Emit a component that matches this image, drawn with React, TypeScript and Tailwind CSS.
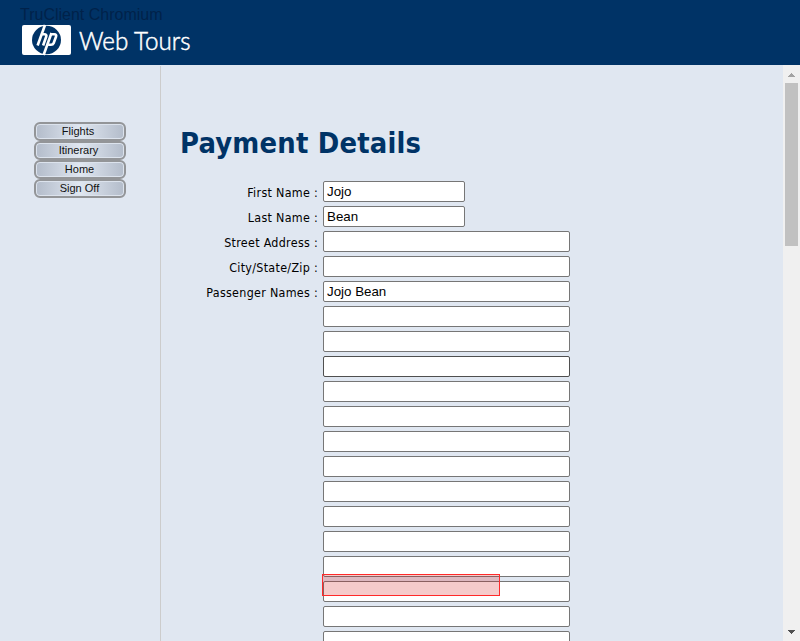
const navItems = [
  { label: 'Flights', shift: 'pr-1' },
  { label: 'Itinerary', shift: 'pr-[3px]' },
  { label: 'Home', shift: 'pr-px' },
  { label: 'Sign Off', shift: 'pr-px' },
];

const fields = [
  { label: 'First Name :', value: 'Jojo', width: 'w-[142px]', border: 'border-[#767676]' },
  { label: 'Last Name :', value: 'Bean', width: 'w-[142px]', border: 'border-[#767676]' },
  { label: 'Street Address :', value: '', width: 'w-[247px]', border: 'border-[#767676]' },
  { label: 'City/State/Zip :', value: '', width: 'w-[247px]', border: 'border-[#767676]' },
  { label: 'Passenger Names :', value: 'Jojo Bean', width: 'w-[247px]', border: 'border-[#767676]' },
  ...Array.from({ length: 14 }, (_, i) => ({
    label: '',
    value: '',
    width: 'w-[247px]',
    border: i === 2 ? 'border-[#4f4f4f]' : 'border-[#767676]',
  })),
];

function Logo() {
  return (
    <svg width="172" height="32" viewBox="0 0 172 32" className="block">
      <rect x="0" y="1" width="49" height="30" rx="2" fill="#fff" />
      <ellipse cx="24.5" cy="16" rx="14.5" ry="14.3" fill="#003366" />
      <g fill="none" stroke="#fff" strokeWidth="2.6">
        <path d="M23 1 L15.6 21.5" />
        <path d="M19.5 10.3 H22.3 Q25.1 10.3 24.2 12.8 L21.1 21.5" />
        <path d="M29.5 9 L21.6 31" />
        <path d="M28.1 10.3 H32.2 Q34.9 10.3 34 12.8 L31.6 19.2 Q31 20.7 29 20.7 H26.1" />
      </g>
      <text x="57" y="26" fontSize="24.5" fontWeight="300" fill="#fff" stroke="#fff" strokeWidth="0.5" textLength="111.5" lengthAdjust="spacingAndGlyphs" fontFamily="Lato, sans-serif">Web Tours</text>
    </svg>
  );
}

function Scrollbar() {
  return (
    <div className="flex w-[17px] shrink-0 flex-col items-center bg-[#f0f0f0] pt-px">
      <svg width="17" height="17" viewBox="0 0 17 17" shapeRendering="crispEdges">
        <path d="M5 11H12V10H11V9H10V8H9V7H8V8H7V9H6V10H5Z" fill="#a3a3a3" />
      </svg>
      <div className="h-[163px] w-[13px] bg-[#c1c1c1]" />
      <svg className="mt-auto" width="17" height="17" viewBox="0 0 17 17" shapeRendering="crispEdges">
        <path d="M5 6H12V7H11V8H10V9H9V10H8V9H7V8H6V7H5Z" fill="#505050" />
      </svg>
    </div>
  );
}

export default function App() {
  return (
    <div className="flex h-[641px] w-[800px] flex-col overflow-hidden bg-[#e0e7f1] font-['Liberation_Sans',Arial,sans-serif] text-black">
      <header className="relative h-[65px] shrink-0 bg-[#003366] pt-6 pl-[22px]">
        <Logo />
        <div className="absolute top-[5px] left-5 text-base leading-[19px] text-[#00224a]">TruClient Chromium</div>
      </header>
      <div className="flex min-h-0 flex-1">
        <nav className="mt-px flex w-[161px] shrink-0 flex-col border-r border-[#cccccc] pt-14 pl-[34px]">
          {navItems.map((item) => (
            <button
              key={item.label}
              className={`flex h-[19px] w-[92px] shrink-0 items-center justify-center rounded-[6px] border-2 border-[#939598] bg-linear-to-r from-[#b3bcca] via-[#e0e7f1] to-[#b3bcca] pb-px text-[11px] leading-3 text-[#111] shadow-[inset_0_0_0_1px_#dce3ed] ${item.shift}`}
            >
              {item.label}
            </button>
          ))}
        </nav>
        <main className="min-w-0 flex-1 overflow-hidden pt-[58px] pl-5">
          <h1 className="-ml-px h-[58px] font-['DejaVu_Sans_Condensed','DejaVu_Sans',sans-serif] text-[28.8px] leading-10 font-bold tracking-[0.2px] whitespace-nowrap text-[#003366]">
            Payment Details
          </h1>
          <form className="relative flex flex-col gap-1">
            {fields.map((field, i) => (
              <div key={i} className="flex h-[21px] shrink-0 items-center gap-1">
                <label className="w-[138px] pt-1 pr-px text-right font-['DejaVu_Sans_Condensed','DejaVu_Sans',sans-serif] text-[12.4px] tracking-[0.3px] whitespace-nowrap">
                  {field.label}
                </label>
                <input
                  readOnly
                  value={field.value}
                  className={`h-[21px] rounded-[2px] border bg-white px-[3px] pb-px text-[13.33px] outline-none ${field.width} ${field.border}`}
                />
              </div>
            ))}
            <div className="pointer-events-none absolute top-[393px] left-[141px] h-[22px] w-[178px] border border-[#ff2a2a] bg-[#d01414]/22" />
          </form>
        </main>
        <Scrollbar />
      </div>
    </div>
  );
}
